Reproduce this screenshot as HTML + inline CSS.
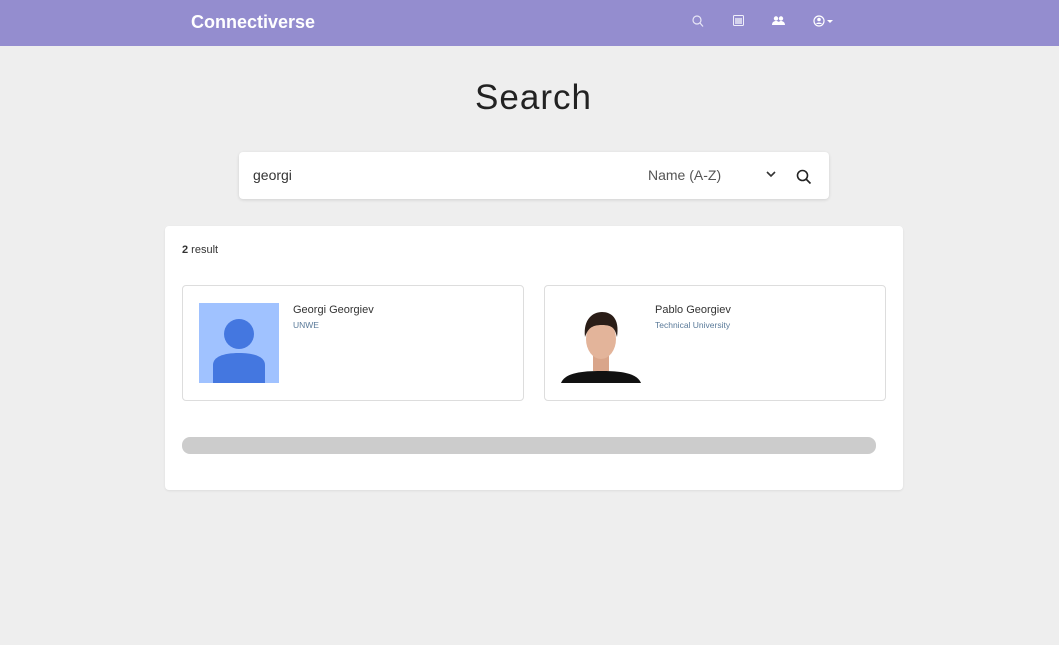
<!DOCTYPE html>
<html><head><meta charset="utf-8"><style>
*{box-sizing:border-box;margin:0;padding:0}
body{width:1059px;height:645px;background:#eeeeee;font-family:"Liberation Sans",sans-serif;color:#222;position:relative;overflow:hidden}
.nav{position:absolute;left:0;top:0;width:1059px;height:46px;background:#948dcf}
.brand{position:absolute;left:191px;top:12px;color:#fff;font-size:18px;font-weight:bold}
.ic{position:absolute;top:15px}
h1{position:absolute;left:0;width:1059px;padding-left:8px;top:78px;text-align:center;font-size:35px;letter-spacing:1px;font-weight:normal;color:#222}
.search{position:absolute;left:239px;top:152px;width:590px;height:47px;background:#fff;border-radius:4px;box-shadow:0 1px 3px rgba(0,0,0,.12)}
.panel{position:absolute;left:165px;top:226px;width:738px;height:264px;background:#fff;border-radius:4px;box-shadow:0 1px 2px rgba(0,0,0,.08)}
.card{position:absolute;top:59px;width:342px;height:116px;border:1px solid #ddd;border-radius:4px;background:#fff}
.nm{position:absolute;left:110px;top:18px;font-size:11px;color:#333}
.sub{position:absolute;left:110px;top:34px;font-size:8.5px;color:#5a7a99}
.bar{position:absolute;left:17px;top:211px;width:694px;height:17px;background:#cccccc;border-radius:8px}
</style></head><body>
<div class="nav">
<div class="brand">Connectiverse</div>
<svg class="ic" style="left:692px" width="12" height="13" viewBox="0 0 12 13"><circle cx="5" cy="5" r="4" fill="none" stroke="#e8e6f6" stroke-width="1.2"/><path d="M8 8l3 3.5" stroke="#e8e6f6" stroke-width="1.2"/></svg>
<svg class="ic" style="left:733px" width="11" height="11" viewBox="0 0 11 11"><rect x=".5" y=".5" width="10" height="10" rx="1" fill="none" stroke="#f0f0fa"/><rect x="2" y="3" width="7" height="6" fill="#f0f0fa" opacity=".7"/></svg>
<svg class="ic" style="left:772px;top:16px" width="13" height="9" viewBox="0 0 13 9"><circle cx="4" cy="2.5" r="2.2" fill="#fff"/><circle cx="9" cy="2.5" r="2.2" fill="#fff"/><path d="M0 9c0-3 2-4 4-4s4 1 4 4zM6 9c0-3 1.5-4 3-4s4 1 4 4z" fill="#fff"/></svg>
<svg class="ic" style="left:813px" width="22" height="12" viewBox="0 0 22 12"><circle cx="6" cy="6" r="5" fill="none" stroke="#fff" stroke-width="1.2"/><circle cx="6" cy="4.5" r="1.8" fill="#fff"/><path d="M3 9c1-2 5-2 6 0" fill="#fff"/><path d="M14 5h6l-3 3z" fill="#fff"/></svg>
</div>
<h1>Search</h1>
<div class="search">
<div style="position:absolute;left:14px;top:15px;font-size:14px;color:#333">georgi</div>
<div style="position:absolute;left:409px;top:15px;font-size:14px;color:#555">Name (A-Z)</div>
<svg style="position:absolute;left:527px;top:19px" width="10" height="7" viewBox="0 0 10 7"><path d="M1 1l4 4 4-4" fill="none" stroke="#333" stroke-width="1.6"/></svg>
<svg style="position:absolute;left:557px;top:17px" width="16" height="16" viewBox="0 0 16 16"><circle cx="6.5" cy="6.5" r="5" fill="none" stroke="#222" stroke-width="1.6"/><path d="M10 10l4.5 4.5" stroke="#222" stroke-width="1.6"/></svg>
</div>
<div class="panel">
<div style="position:absolute;left:17px;top:18px;font-size:11px;color:#333"><b>2</b> result</div>
<div class="card" style="left:17px">
<svg style="position:absolute;left:16px;top:17px" width="80" height="80" viewBox="0 0 80 80"><rect width="80" height="80" fill="#a0c2ff"/><circle cx="40" cy="31" r="15" fill="#4477e0"/><path d="M14 80V62c0-8 10-12 26-12s26 4 26 12v18z" fill="#4477e0"/></svg>
<div class="nm">Georgi Georgiev</div><div class="sub">UNWE</div>
</div>
<div class="card" style="left:379px">
<svg style="position:absolute;left:16px;top:17px" width="80" height="80" viewBox="0 0 80 80"><rect width="80" height="80" fill="#fff"/><path d="M0 80c4-10 20-12 40-12s36 2 40 12z" fill="#111"/><rect x="32" y="52" width="16" height="16" fill="#d9a58a"/><ellipse cx="40" cy="36" rx="15" ry="20" fill="#e3b49a"/><path d="M24 34c-2-18 8-25 17-25s18 6 15 25c-2-8-4-12-15-12s-14 4-17 12z" fill="#2a1d17"/></svg>
<div class="nm">Pablo Georgiev</div><div class="sub">Technical University</div>
</div>
<div class="bar"></div>
</div>
</body></html>
